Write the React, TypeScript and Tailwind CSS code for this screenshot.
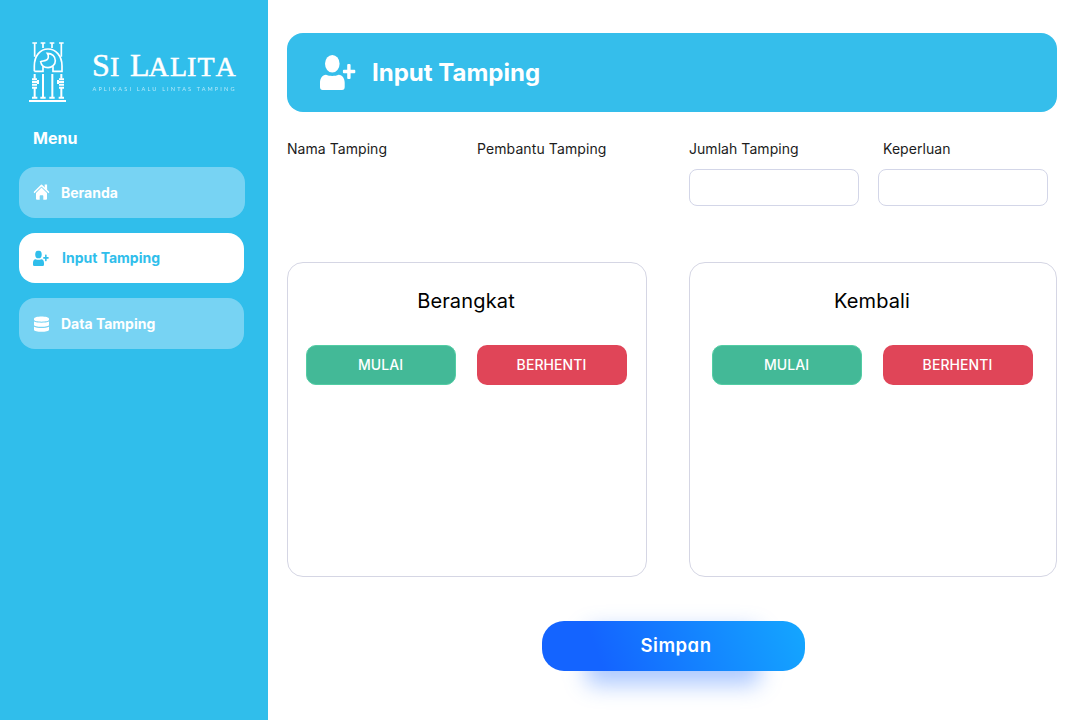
import React from "react";

function LogoMark() {
  return (
    <svg width="60" height="76" viewBox="0 0 180 228" fill="none" stroke="white" className="shrink-0" aria-hidden="true">
      <path strokeWidth="5" d="M37 27H51M62 27H76M89 27H103M117 27H131" />
      <path strokeWidth="5" d="M44 27V68M69 27V42M96 27V42M124 27V68" />
      <path strokeWidth="5" d="M43 112V96C43 65 61 45 84 45S126 65 126 96V112H99V97M43 112H69V97" />
      <path strokeWidth="5" d="M82 58C88 67 85 76 78 79C72 82 67 80 62 83C64 94 73 101 84 101C96 101 106 92 106 80C106 67 96 58 82 58Z" />
      <path strokeWidth="6" d="M69 120V190M97 120V190" />
      <path strokeWidth="6" d="M44 120V134M124 120V134M44 162V190M124 162V190" />
      <path strokeWidth="6" d="M36 136H51M36 144H51M36 152H51M36 161H51M117 136H132M117 144H132M117 152H132M117 161H132" />
      <path strokeWidth="6" d="M54 138V150M114 138V150" />
      <path strokeWidth="6" d="M36 191H52M61 191H77M88 191H104M116 191H132" />
      <path strokeWidth="6" d="M27 201H138" />
    </svg>
  );
}

function Wordmark() {
  return (
    <svg width="150" height="54" viewBox="0 0 150 54" fill="white" className="font-['Liberation_Serif',serif]">
      <text y="34.5" stroke="white" strokeWidth=".5" fontSize="28">
        <tspan x="0" fontSize="32">S</tspan>
        <tspan x="18">I</tspan>
        <tspan x="38" fontSize="32">L</tspan>
        <tspan x="56.5">A</tspan>
        <tspan x="78">L</tspan>
        <tspan x="95">I</tspan>
        <tspan x="105.5">T</tspan>
        <tspan x="123.5">A</tspan>
      </text>
      <text x="0.5" y="50" fontSize="5.6" opacity=".65" textLength="142" lengthAdjust="spacing" className="font-['Lato',sans-serif]">
        APLIKASI LALU LINTAS TAMPING
      </text>
    </svg>
  );
}

function UserPlus({ className }: { className: string }) {
  return (
    <svg viewBox="0 0 36 36" fill="currentColor" className={className} aria-hidden="true">
      <ellipse cx="12.3" cy="8.8" rx="7.3" ry="8.8" />
      <path d="M6 19.7C9.5 21.3 15 21.3 18.7 19.7C22.5 19.7 24.7 23.7 24.7 27.7V32Q24.7 35 22 35H2.7Q0 35 0 32V27.7C0 23.7 2.2 19.7 6 19.7Z" />
      <path d="M27.2 10Q27.2 9 28.2 9H29.6Q30.6 9 30.6 10V14.8H34.3Q35.3 14.8 35.3 15.8V17.3Q35.3 18.3 34.3 18.3H30.6V23.1Q30.6 24.1 29.6 24.1H28.2Q27.2 24.1 27.2 23.1V18.3H23.9Q22.9 18.3 22.9 17.3V15.8Q22.9 14.8 23.9 14.8H27.2Z" />
    </svg>
  );
}

function HouseIcon() {
  return (
    <svg viewBox="0 0 16 17" className="h-[17px] w-4 -translate-x-[0.5px] -translate-y-[0.5px]" fill="none" aria-hidden="true">
      <path d="M.9 8.8 8 1.9 15.1 8.8" stroke="white" strokeWidth="1.6" strokeLinecap="round" strokeLinejoin="round" />
      <path d="M11.2 1H13.6V7L11.2 4.7Z" fill="white" />
      <path d="M8 4.1 13.5 9.4V15.3Q13.5 16.3 12.5 16.3H9.8V12.4Q9.8 11.7 9.1 11.7H6.9Q6.2 11.7 6.2 12.4V16.3H3.5Q2.5 16.3 2.5 15.3V9.4Z" fill="white" />
    </svg>
  );
}

function DatabaseIcon() {
  return (
    <svg viewBox="0 0 16 16" className="h-4 w-4 translate-x-[0.5px]" fill="white" aria-hidden="true">
      <path d="M.5 2.8C.5-.2 15.5-.2 15.5 2.8V3.8C15.5 6.3.5 6.3.5 3.8Z" />
      <path d="M.5 5.6C3.5 7.2 12.5 7.2 15.5 5.6V9C15.5 11.4.5 11.4.5 9Z" />
      <path d="M.5 10.8C3.5 12.4 12.5 12.4 15.5 10.8V13.7C15.5 16.4.5 16.4.5 13.7Z" />
    </svg>
  );
}

function TripCard({ title, className }: { title: string; className: string }) {
  return (
    <section className={`h-[315px] rounded-2xl border border-[#d5d6e4] pt-[22px] ${className}`}>
      <h2 className="text-center text-[20px] leading-8 tracking-[.15px] text-black">{title}</h2>
      <div className="mt-7 flex gap-[21px] text-[14px] font-medium tracking-[.08px] text-white">
        <button className="h-10 w-[150px] rounded-[10px] border border-[#53cda4] bg-[#43b997] pr-px pb-[2px]">MULAI</button>
        <button className="h-10 w-[150px] rounded-[10px] bg-[#e04558] pr-px pb-[2px]">BERHENTI</button>
      </div>
    </section>
  );
}

export default function App() {
  return (
    <div className="flex h-[720px] w-[1080px] overflow-hidden bg-white font-['Inter',sans-serif]">
      <aside className="w-[268px] shrink-0 bg-[#30beeb] pt-[34px] text-white">
        <div className="flex h-[76px] pl-5">
          <LogoMark />
          <div className="pt-[7px] pl-3"><Wordmark /></div>
        </div>
        <h2 className="mt-4 pl-[33px] text-[16px] leading-6 font-bold">Menu</h2>
        <nav className="mt-[17px] flex flex-col gap-[15px] pl-[19px] text-[14px] font-bold">
          <a className="flex h-[51px] w-[226px] items-center rounded-2xl bg-[#77d3f3] pl-[15px]">
            <HouseIcon /><span className="ml-[11px] pb-px">Beranda</span>
          </a>
          <a className="flex h-[50px] w-[225px] items-center rounded-2xl bg-white pl-[14px] text-[#30beeb]">
            <UserPlus className="h-4 w-4 translate-y-[0.5px]" /><span className="ml-[13px] pb-[2px]">Input Tamping</span>
          </a>
          <a className="flex h-[51px] w-[225px] items-center rounded-2xl bg-[#77d3f3] pl-[14px]">
            <DatabaseIcon /><span className="ml-3 pb-px">Data Tamping</span>
          </a>
        </nav>
      </aside>
      <main className="flex-1 pt-[33px] pl-[19px]">
        <header className="flex h-[79px] w-[770px] items-center rounded-2xl bg-[#35beeb] pl-[33px] text-white">
          <UserPlus className="h-9 w-9" />
          <h1 className="ml-4 text-[24px] font-bold">Input Tamping</h1>
        </header>
        <form>
          <div className="mt-[27px] flex h-[67px] text-[14px] leading-5 text-[#1c1c1c]">
            <span className="w-[190px] tracking-[.05px]">Nama Tamping</span>
            <span className="w-[212px] tracking-[.1px]">Pembantu Tamping</span>
            <label className="w-[189px] tracking-[.05px]">
              Jumlah Tamping
              <input className="mt-[10px] block h-[37px] w-[170px] rounded-lg border border-[#d3d6e8] px-3 outline-none" />
            </label>
            <label className="tracking-[.05px]">
              <span className="pl-[5px]">Keperluan</span>
              <input className="mt-[10px] block h-[37px] w-[170px] rounded-lg border border-[#d3d6e8] px-3 outline-none" />
            </label>
          </div>
          <div className="mt-14 flex gap-[42px]">
            <TripCard title="Berangkat" className="w-[360px] pl-[18px] [&_h2]:w-[320px]" />
            <TripCard title="Kembali" className="w-[368px] pl-[22px] [&_h2]:w-[320px]" />
          </div>
          <div className="relative isolate mt-11 ml-[255px] w-[263px]">
            <div className="absolute top-[8px] left-[44px] -z-10 h-[56px] w-[174px] rounded-lg bg-[#1464ff]/35 blur-[11px]" />
            <button className="block h-[50px] w-full rounded-[22px] bg-[linear-gradient(69deg,#1464ff_22%,#14a7ff_100%)] pl-[5px] text-[18.5px] font-semibold tracking-[.5px] text-white [font-feature-settings:'cv11']">
              Simpan
            </button>
          </div>
        </form>
      </main>
    </div>
  );
}
